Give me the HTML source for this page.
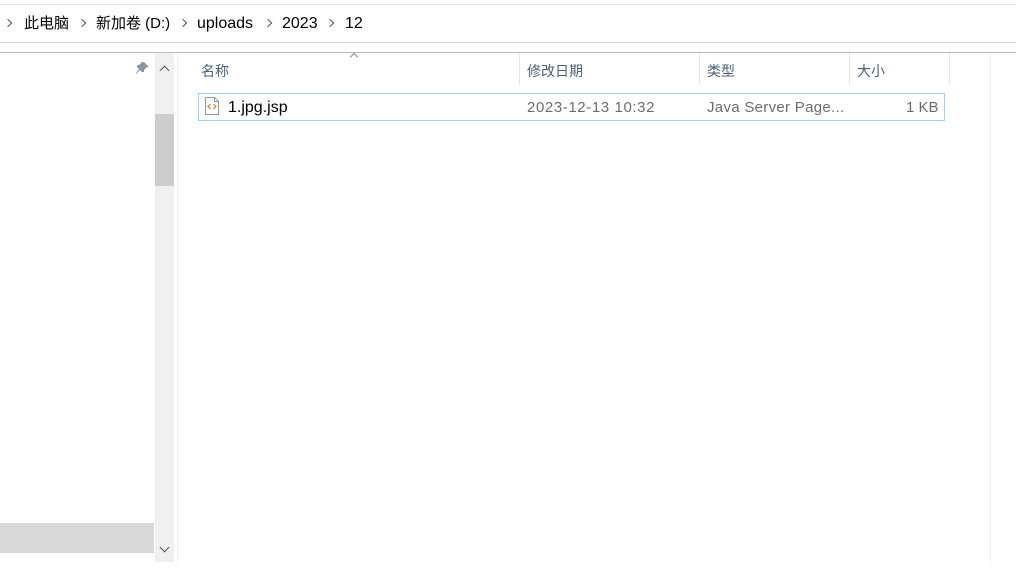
<!DOCTYPE html>
<html><head><meta charset="utf-8"><style>
body{margin:0;width:1016px;height:580px;background:#fff;position:relative;overflow:hidden;font-family:"Liberation Sans","Noto Sans CJK SC",sans-serif;}
.a{position:absolute}
.t{font-size:16px;white-space:nowrap;line-height:20px;top:14px;color:#000}
.chev{position:absolute;width:5px;height:5px;border-right:1.3px solid #555;border-top:1.3px solid #555;transform:rotate(45deg)}
.h{color:#4c607a;font-size:14px;top:61px;line-height:20px}
.sep{position:absolute;top:53px;height:32px;width:1px;background:#e5e5e5}
.d{color:#6d6d6d;font-size:15px;top:98px;line-height:20px;white-space:nowrap}
</style></head><body>
<div class="a" style="left:0;top:4px;width:1016px;height:1px;background:#e5e5e5"></div>
<div class="a" style="left:0;top:42px;width:1016px;height:1px;background:#dcdcdc"></div>
<div class="a" style="left:0;top:52px;width:1016px;height:1px;background:#bcbcbc"></div>
<div class="chev" style="left:5px;top:20px"></div>
<div class="a t" style="left:24px;font-size:15px">此电脑</div>
<div class="chev" style="left:79px;top:20px"></div>
<div class="a t" style="left:96px;font-size:15px">新加卷 (D:)</div>
<div class="chev" style="left:180px;top:20px"></div>
<div class="a t" style="left:197px">uploads</div>
<div class="chev" style="left:265px;top:20px"></div>
<div class="a t" style="left:282px">2023</div>
<div class="chev" style="left:327px;top:20px"></div>
<div class="a t" style="left:345px">12</div>
<svg class="a" style="left:136px;top:61px" width="14" height="14" viewBox="0 0 14 14"><path d="M8 1l5 5-2 0-3 3 0 2-2 0-2-2-4 4 0-1 3-4-2-2 0-2 2 0 3-3z" fill="#8a96a3"/></svg>
<div class="a" style="left:155px;top:53px;width:19px;height:509px;background:#f0f0f0"></div>
<div class="a" style="left:155px;top:114px;width:19px;height:72px;background:#cdcdcd"></div>
<div class="a" style="left:161px;top:67px;width:6px;height:6px;border-left:1.5px solid #555;border-top:1.5px solid #555;transform:rotate(45deg)"></div>
<div class="a" style="left:161px;top:544px;width:6px;height:6px;border-right:1.5px solid #555;border-bottom:1.5px solid #555;transform:rotate(45deg)"></div>
<div class="a" style="left:0;top:523px;width:154px;height:30px;background:#d9d9d9"></div>
<div class="a" style="left:177px;top:53px;width:1px;height:509px;background:#f0f0f0"></div>
<div class="a" style="left:990px;top:53px;width:1px;height:509px;background:#f0f0f0"></div>
<div class="a" style="left:351px;top:54px;width:5px;height:5px;border-left:1px solid #888;border-top:1px solid #888;transform:rotate(45deg)"></div>
<div class="a h" style="left:201px">名称</div>
<div class="sep" style="left:519px"></div>
<div class="a h" style="left:527px">修改日期</div>
<div class="sep" style="left:699px"></div>
<div class="a h" style="left:707px">类型</div>
<div class="sep" style="left:849px"></div>
<div class="a h" style="left:857px">大小</div>
<div class="sep" style="left:949px"></div>
<div class="a" style="left:198px;top:93px;width:745px;height:26px;border:1px solid #99d1ff"></div>
<svg class="a" style="left:205px;top:97px" width="14" height="18" viewBox="0 0 14 18"><path d="M0.5 0.5h9l4 4v13h-13z" fill="#fff" stroke="#999"/><path d="M9.5 0.5v4h4" fill="none" stroke="#999"/><path d="M5.5 7l-2.5 2.5 2.5 2.5M8.5 7l2.5 2.5-2.5 2.5" fill="none" stroke="#e07b39" stroke-width="1.2"/></svg>
<div class="a t" style="left:228px;top:98px">1.jpg.jsp</div>
<div class="a d" style="left:527px;letter-spacing:0.6px">2023-12-13 10:32</div>
<div class="a d" style="left:707px;letter-spacing:0.3px">Java Server Page...</div>
<div class="a d" style="left:906px">1 KB</div>
</body></html>
